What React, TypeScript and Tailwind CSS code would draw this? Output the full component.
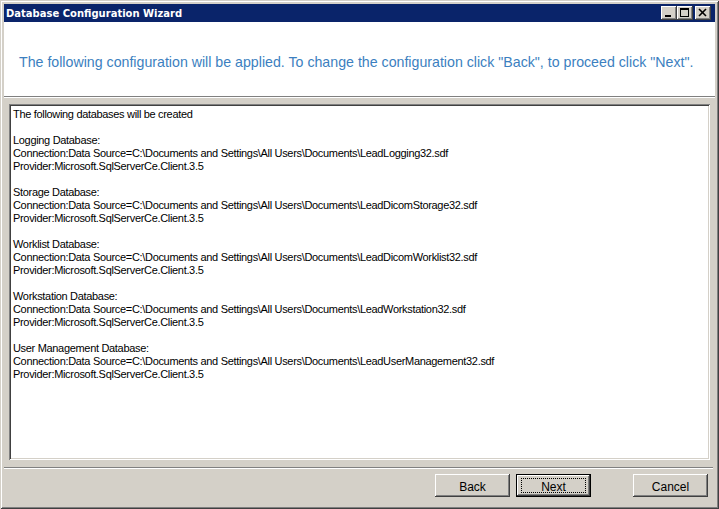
const raised =
  "shadow-[inset_-1px_-1px_#404040,inset_1px_1px_#ffffff,inset_-2px_-2px_#808080,inset_2px_2px_#d4d0c8]";

const lines = `The following databases will be created

Logging Database:
Connection:Data Source=C:\\Documents and Settings\\All Users\\Documents\\LeadLogging32.sdf
Provider:Microsoft.SqlServerCe.Client.3.5

Storage Database:
Connection:Data Source=C:\\Documents and Settings\\All Users\\Documents\\LeadDicomStorage32.sdf
Provider:Microsoft.SqlServerCe.Client.3.5

Worklist Database:
Connection:Data Source=C:\\Documents and Settings\\All Users\\Documents\\LeadDicomWorklist32.sdf
Provider:Microsoft.SqlServerCe.Client.3.5

Workstation Database:
Connection:Data Source=C:\\Documents and Settings\\All Users\\Documents\\LeadWorkstation32.sdf
Provider:Microsoft.SqlServerCe.Client.3.5

User Management Database:
Connection:Data Source=C:\\Documents and Settings\\All Users\\Documents\\LeadUserManagement32.sdf
Provider:Microsoft.SqlServerCe.Client.3.5`;

function CaptionButton({ kind }: { kind: "min" | "max" | "close" }) {
  return (
    <div className={`w-[16px] h-[14px] bg-[#d4d0c8] flex items-center justify-center ${raised}`}>
      <svg width="16" height="14" viewBox="0 0 16 14">
        {kind === "min" && <rect x="4" y="9" width="6" height="2" fill="#000" />}
        {kind === "max" && (
          <g fill="none" stroke="#000">
            <rect x="3.5" y="2.5" width="8" height="8" />
            <line x1="3" y1="3.5" x2="12" y2="3.5" />
          </g>
        )}
        {kind === "close" && (
          <g stroke="#000" strokeWidth="1.6">
            <line x1="4" y1="3" x2="11" y2="10" />
            <line x1="11" y1="3" x2="4" y2="10" />
          </g>
        )}
      </svg>
    </div>
  );
}

function Button({ label, isDefault }: { label: string; isDefault?: boolean }) {
  if (isDefault) {
    return (
      <div className="w-[75px] h-[23px] border border-black bg-[#d4d0c8]">
        <div className={`w-full h-full flex items-center justify-center ${raised}`}>
          <div className="w-[65px] h-[15px] border border-dotted border-black flex items-center justify-center pt-[2px]">
            {label}
          </div>
        </div>
      </div>
    );
  }
  return (
    <div className={`w-[75px] h-[23px] bg-[#d4d0c8] flex items-center justify-center pt-[2px] ${raised}`}>
      {label}
    </div>
  );
}

export default function App() {
  return (
    <div
      className="w-[719px] h-[509px] bg-[#d4d0c8] p-[4px] flex flex-col shadow-[inset_1px_1px_#d4d0c8,inset_-1px_-1px_#404040,inset_2px_2px_#ffffff,inset_-2px_-2px_#808080]"
      style={{ fontFamily: '"Liberation Sans", Arial, sans-serif' }}
    >
      {/* title bar */}
      <div className="h-[18px] bg-[#0a246a] flex items-center pl-[2px] pr-[4px]">
        <span className="text-white font-bold text-[10px] flex-1" style={{ fontFamily: '"DejaVu Sans", Tahoma, sans-serif' }}>
          Database Configuration Wizard
        </span>
        <div className="flex">
          <CaptionButton kind="min" />
          <CaptionButton kind="max" />
          <div className="w-[2px]" />
          <CaptionButton kind="close" />
        </div>
      </div>

      {/* header */}
      <div className="h-[74px] bg-white flex items-center pl-[15px] pt-[8px]">
        <p className="text-[14.2px] text-[#3c7fc0]">
          The following configuration will be applied. To change the configuration click "Back", to proceed click "Next".
        </p>
      </div>
      <div className="h-px bg-[#808080]" />
      <div className="h-px bg-white" />

      {/* content */}
      <div className="flex-1 flex flex-col px-[5px] pt-[6px]">
        <div className="h-[356px] bg-white p-[3px] shadow-[inset_1px_1px_#808080,inset_-1px_-1px_#ffffff,inset_2px_2px_#404040,inset_-2px_-2px_#d4d0c8]">
          <pre
            className="whitespace-pre text-[11px] leading-[13px] tracking-[-0.32px] text-black pl-[1px] pt-[1px]"
            style={{ fontFamily: '"Liberation Sans", Arial, sans-serif' }}
          >
            {lines}
          </pre>
        </div>
      </div>

      <div className="h-px bg-[#808080] mr-[2px]" />
      <div className="h-px bg-white mr-[2px]" />

      {/* buttons */}
      <div className="flex pt-[5px] pb-[8px] pr-[7px] text-[12px] text-black">
        <div className="flex-1" />
        <Button label="Back" />
        <div className="w-[6px]" />
        <Button label="Next" isDefault />
        <div className="w-[42px]" />
        <Button label="Cancel" />
      </div>
    </div>
  );
}
